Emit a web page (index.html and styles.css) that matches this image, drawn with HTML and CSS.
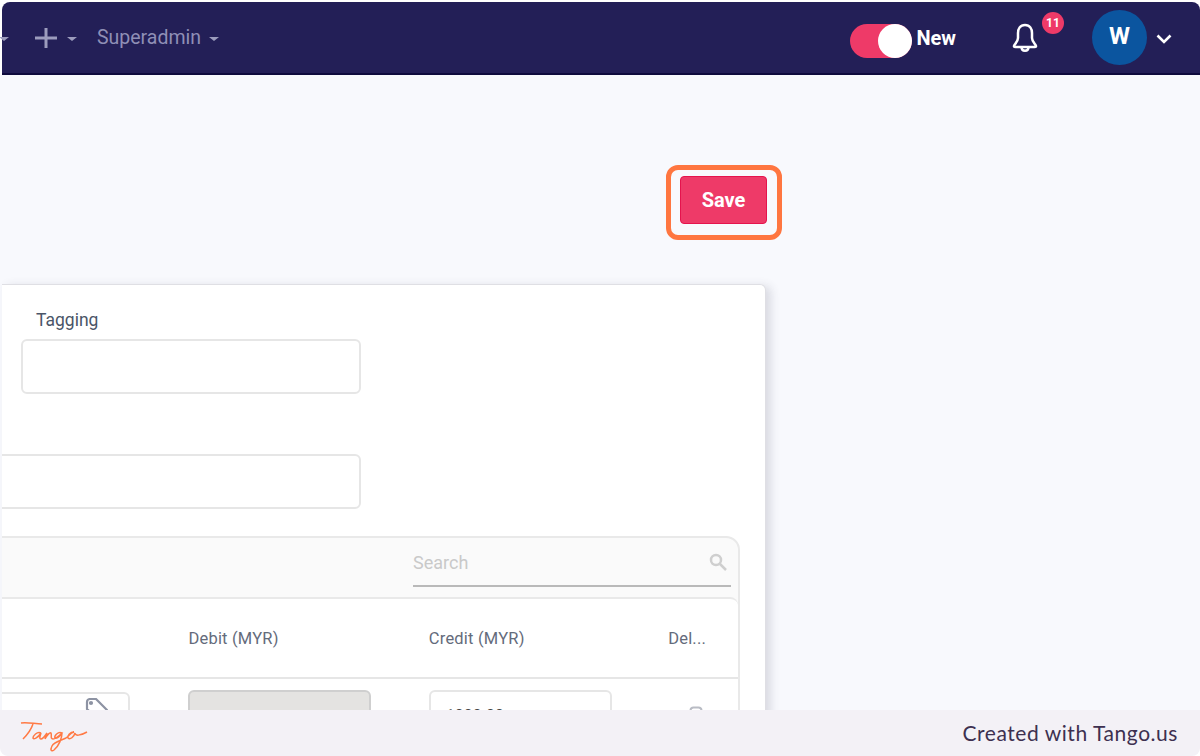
FILE: index.html
```html
<!DOCTYPE html>
<html lang="en">
<head>
  <meta charset="UTF-8">
  <meta name="viewport" content="width=device-width, initial-scale=1.0">
  <title>Journal entry</title>
  <link rel="stylesheet" href="styles.css">
</head>
<body>
  <div class="frame">
    <!-- Top bar -->
    <header class="topbar">
      <div class="nav-left">
        <span class="caret caret-first"></span>
        <svg class="plus-icon" width="24" height="24" viewBox="0 0 24 24"><path d="M12 2v20M1 12h22" /></svg>
        <span class="caret caret-plus"></span>
        <span class="nav-item">Superadmin</span>
        <span class="caret"></span>
      </div>
      <div class="nav-right">
        <div class="toggle"><span class="toggle-knob"></span></div>
        <span class="toggle-label">New</span>
        <div class="bell">
          <svg width="26" height="30" viewBox="0 0 26 30"><path d="M13 2C8 2 6 6 6 10v5c0 3-2 5-3.500 7-1 1.500-.5 2 1 2h19c1.500 0 2-.5 1-2-1.500-2-3.500-4-3.500-7v-5c0-4-2-8-7-8zM9.500 24c0 5 7 5 7 0" /></svg>
          <span class="badge">11</span>
        </div>
        <div class="avatar">W</div>
        <svg class="chevron" width="16" height="10" viewBox="0 0 16 10"><path d="M1.500 1.500L8 8l6.500-6.500" /></svg>
      </div>
    </header>

    <!-- Page -->
    <main class="page">
      <div class="page-inner">
        <div class="actions">
          <button class="save-btn">Save<span class="highlight"></span></button>
        </div>

        <section class="card">
          <label class="field-label">Tagging</label>
          <input class="text-field" type="text">
          <input class="text-field text-field-wide" type="text">

          <div class="panel">
            <div class="panel-search">
              <div class="search-box">
                <span class="search-text">Search</span>
                <svg width="18" height="18" viewBox="0 0 18 18"><circle cx="7" cy="7" r="5" /><path d="M11 11l6 6" /></svg>
              </div>
            </div>
            <div class="table">
              <div class="table-head">
                <span class="col col-account"></span>
                <span class="col col-debit">Debit (MYR)</span>
                <span class="col col-credit">Credit (MYR)</span>
                <span class="col col-del">Del...</span>
              </div>
              <div class="table-row">
                <div class="col col-account">
                  <div class="cell-input cell-account">
                    <svg class="tag-icon" width="24" height="24" viewBox="0 0 24 24"><path d="M3 4a3 3 0 0 1 3-3h6l11 11-9 10L3 11z" /><circle cx="7" cy="5" r="1" /></svg>
                  </div>
                </div>
                <div class="col col-debit"><div class="cell-input cell-disabled"></div></div>
                <div class="col col-credit"><div class="cell-input">1000.00</div></div>
                <div class="col col-del">
                  <svg class="trash-icon" width="14" height="18" viewBox="0 0 14 18"><rect x="1.500" y="1.500" width="11" height="15" rx="3" /></svg>
                </div>
              </div>
            </div>
          </div>
        </section>
      </div>
    </main>

    <!-- Tango footer -->
    <footer class="tango-bar">
      <svg class="tango-logo" width="72" height="36" viewBox="0 0 72 36" role="img" aria-label="Tango">
        <path d="M1 5C8 4 15 6 22 6" />
        <path d="M13 6C11 12 7 17 3 21" />
        <path d="M21 15C17 13 13 18 13 20C13 22 18 20 21 15C20 18 19 21 21 21C23 21 25 18 27 15C26 17 25.500 19 25 21C27 17 30 14 31 15C32 17 30 21 33 21C36 21 39 18 42 15C38 13 34 18 35 20C36 21 40 19 42 15C42 20 39 28 34 32C31 34 30 32 32 28C34 24 40 23 46 20C49 18 50 15 54 14C50 14 47 18 48 20C50 22 54 19 55 15C55 18 60 18 67 14" />
      </svg>
      <span class="tango-text">Created with Tango.us</span>
    </footer>
  </div>
</body>
</html>
```

FILE: styles.css
```css
/* Reset */
* {
  margin: 0;
  padding: 0;
  box-sizing: border-box;
}

body {
  width: 1200px;
  height: 756px;
  overflow: hidden;
  background-color: #fff;
  font-family: Roboto, "Liberation Sans", sans-serif;
}

.frame {
  display: flex;
  flex-direction: column;
  height: 756px;
  overflow: hidden;
  border-radius: 0 0 8px 8px;
}

/* Top bar */
.topbar {
  display: flex;
  justify-content: space-between;
  align-items: center;
  flex: none;
  height: 73px;
  margin: 2px 0 0 2px;
  background-color: #231f57;
  border-bottom: 2px solid #0f0b3d;
  border-radius: 8px 8px 0 0;
}

.nav-left {
  display: flex;
  align-items: center;
}

.caret {
  width: 0;
  height: 0;
  margin-top: 2px;
  border-left: 5px solid transparent;
  border-right: 5px solid transparent;
  border-top: 4px solid #9c9cbd;
}

.caret-first {
  margin-left: -3px;
}

.plus-icon {
  margin-left: 25px;
}

.plus-icon path {
  fill: none;
  stroke: #9c9cbd;
  stroke-width: 3;
}

.caret-plus {
  margin-left: 9px;
}

.nav-item {
  margin: 0 8px 0 20px;
  color: #8f8fb6;
  font-size: 19.500px;
}

.nav-right {
  display: flex;
  align-items: center;
}

.toggle {
  display: flex;
  justify-content: flex-end;
  align-items: center;
  width: 62px;
  height: 34px;
  margin-top: 6px;
  background-color: #ee3a68;
  border-radius: 17px;
}

.toggle-knob {
  width: 34px;
  height: 34px;
  background-color: #fff;
  border-radius: 50%;
}

.toggle-label {
  margin-left: 4px;
  color: #fff;
  font-size: 20px;
  font-weight: 700;
}

.bell {
  position: relative;
  display: flex;
  margin-left: 56px;
}

.bell path {
  fill: none;
  stroke: #fff;
  stroke-width: 2.500;
}

.badge {
  position: absolute;
  top: -11px;
  left: 30px;
  width: 22px;
  height: 22px;
  background-color: #ee3a68;
  border-radius: 50%;
  color: #fff;
  font-size: 12px;
  font-weight: 700;
  line-height: 22px;
  text-align: center;
}

.avatar {
  width: 55px;
  height: 55px;
  margin-left: 54px;
  background-color: #0b559f;
  border-radius: 50%;
  color: #fff;
  font-size: 24px;
  font-weight: 700;
  line-height: 52px;
  text-align: center;
}

.chevron {
  margin: 2px 28px 0 9px;
}

.chevron path {
  fill: none;
  stroke: #fff;
  stroke-width: 2.600;
}

/* Page */
.page {
  flex: 1;
  min-height: 0;
  overflow: hidden;
  background-color: #f8f9fd;
}

.page-inner {
  width: 765px;
  margin-left: 2px;
}

.actions {
  display: flex;
  justify-content: flex-end;
  padding-top: 101px;
}

.save-btn {
  position: relative;
  width: 87px;
  height: 48px;
  background-color: #ee3a68;
  border: 1px solid #e5134d;
  border-radius: 4px;
  color: #fff;
  font-family: Roboto, "Liberation Sans", sans-serif;
  font-size: 20px;
  font-weight: 700;
}

.highlight {
  position: absolute;
  top: -12px;
  left: -15px;
  right: -16px;
  bottom: -17px;
  border: 5px solid #ff7640;
  border-radius: 12px;
}

/* Card */
.card {
  width: 764px;
  height: 600px;
  margin-top: 60px;
  padding-top: 25px;
  overflow: hidden;
  background-color: #fff;
  border: 1px solid #dfdfe4;
  border-left: none;
  border-radius: 0 6px 0 0;
  box-shadow: 5px 2px 10px rgba(60, 60, 90, 0.16);
}

.field-label {
  display: block;
  height: 20px;
  margin-left: 34px;
  color: #4a5568;
  font-size: 17.500px;
  line-height: 20px;
}

.text-field {
  display: block;
  width: 340px;
  height: 55px;
  margin: 9px 0 0 19px;
  background-color: #fff;
  border: 2px solid #e6e6e6;
  border-radius: 6px;
}

.text-field-wide {
  width: 380px;
  margin: 60px 0 0 -21px;
}

/* Panel with table */
.panel {
  width: 760px;
  margin: 27px 0 0 -22px;
  background-color: #fafafa;
  border: 2px solid #e9e9e9;
  border-radius: 14px 14px 0 0;
}

.panel-search {
  display: flex;
  justify-content: flex-end;
  height: 59px;
  padding: 9px 7px 0 0;
}

.search-box {
  display: flex;
  justify-content: space-between;
  align-items: center;
  width: 318px;
  height: 40px;
  padding-bottom: 8px;
  border-bottom: 2px solid #b9b9b9;
}

.search-text {
  color: #c9c9c9;
  font-size: 18px;
}

.search-box svg {
  margin-right: 4px;
}

.search-box circle,
.search-box path {
  fill: none;
  stroke: #cfcfcf;
  stroke-width: 2.500;
}

.table {
  background-color: #fff;
  border-top: 2px solid #e9e9e9;
  border-radius: 8px 8px 0 0;
}

.table-head,
.table-row {
  display: flex;
}

.table-head {
  align-items: center;
  height: 80px;
  border-bottom: 2px solid #e6e6e6;
  color: #646b7b;
  font-size: 16.500px;
  letter-spacing: 0.200px;
}

.table-row {
  padding-top: 11px;
}

.col-account {
  width: 207px;
}

.col-debit {
  width: 241px;
}

.col-credit {
  width: 240px;
}

.col-del {
  width: 70px;
}

.cell-input {
  width: 183px;
  height: 46px;
  padding: 14px 15px;
  background-color: #fff;
  border: 2px solid #e6e6e6;
  border-radius: 6px;
  color: #444;
  font-size: 16px;
}

.cell-account {
  display: flex;
  justify-content: flex-end;
  width: 148px;
  margin-top: 2px;
  padding: 4px 20px 0 0;
}

.tag-icon {
  flex: none;
}

.tag-icon path,
.tag-icon circle {
  fill: none;
  stroke: #8d93a3;
  stroke-width: 2.200;
}

.cell-disabled {
  background-color: #e4e3e1;
  border-color: #cfcfcf;
}

.trash-icon {
  margin: 16px 0 0 21px;
}

.trash-icon rect {
  fill: none;
  stroke: #b9bcc4;
  stroke-width: 2;
}

/* Tango footer */
.tango-bar {
  display: flex;
  justify-content: space-between;
  align-items: center;
  flex: none;
  height: 46px;
  padding: 0 22px 0 20px;
  background-color: #f3f1f6;
}

.tango-logo {
  margin-top: 6px;
}

.tango-logo path {
  fill: none;
  stroke: #ff7a45;
  stroke-width: 1.500;
}

.tango-text {
  margin-bottom: 2px;
  color: #3d3050;
  font-family: Lato, "Noto Sans", sans-serif;
  font-size: 21px;
  letter-spacing: 0.550px;
}
```
